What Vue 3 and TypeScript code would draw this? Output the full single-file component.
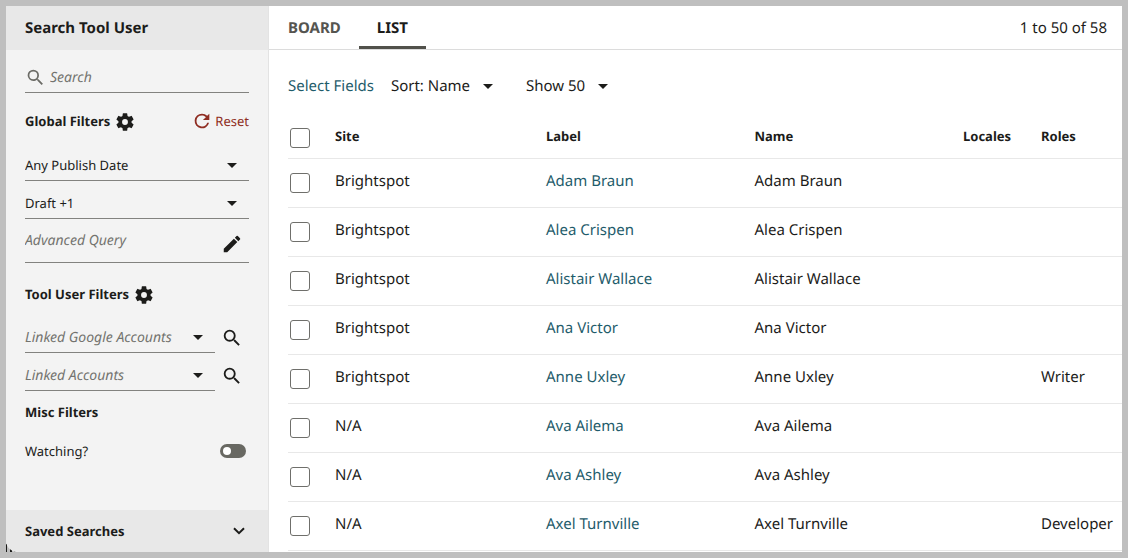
<script setup lang="ts">
import { ref } from 'vue'

interface User {
  site: string
  name: string
  role?: string
}

const users: User[] = [
  { site: 'Brightspot', name: 'Adam Braun' },
  { site: 'Brightspot', name: 'Alea Crispen' },
  { site: 'Brightspot', name: 'Alistair Wallace' },
  { site: 'Brightspot', name: 'Ana Victor' },
  { site: 'Brightspot', name: 'Anne Uxley', role: 'Writer' },
  { site: 'N/A', name: 'Ava Ailema' },
  { site: 'N/A', name: 'Ava Ashley' },
  { site: 'N/A', name: 'Axel Turnville', role: 'Developer' },
]

const linkedFilters = ['Linked Google Accounts', 'Linked Accounts']
const publishFilters = [
  { label: 'Publish date', value: 'Any Publish Date' },
  { label: 'Status', value: 'Draft +1' },
]
const activeTab = ref<'board' | 'list'>('list')
const watching = ref(false)

const gearPath =
  'M19.14 12.94c.04-.3.06-.61.06-.94s-.02-.64-.07-.94l2.03-1.58a.49.49 0 0 0 .12-.61l-1.92-3.32a.49.49 0 0 0-.59-.22l-2.39.96a7 7 0 0 0-1.62-.94l-.36-2.54a.48.48 0 0 0-.48-.41h-3.84a.47.47 0 0 0-.47.41l-.36 2.54c-.59.24-1.13.57-1.62.94l-2.39-.96a.48.48 0 0 0-.59.22L2.74 8.87a.47.47 0 0 0 .12.61l2.03 1.58c-.05.3-.09.63-.09.94s.02.64.07.94l-2.03 1.58a.49.49 0 0 0-.12.61l1.92 3.32c.12.22.37.29.59.22l2.39-.96c.5.38 1.03.7 1.62.94l.36 2.54c.05.24.24.41.48.41h3.84c.24 0 .44-.17.47-.41l.36-2.54a6.8 6.8 0 0 0 1.62-.94l2.39.96c.22.08.47 0 .59-.22l1.92-3.32a.47.47 0 0 0-.12-.61zM12 15.2a3.2 3.2 0 1 1 0-6.4 3.2 3.2 0 0 1 0 6.4z'
const searchPath =
  'M15.5 14h-.79l-.28-.27A6.47 6.47 0 0 0 16 9.5 6.5 6.5 0 1 0 9.5 16c1.61 0 3.09-.59 4.23-1.57l.27.28v.79l5 4.99L20.49 19zm-6 0a4.5 4.5 0 1 1 0-9 4.5 4.5 0 0 1 0 9z'
const refreshPath =
  'M17.65 6.35A7.96 7.96 0 0 0 12 4a8 8 0 1 0 7.73 10h-2.08A6 6 0 1 1 12 6c1.66 0 3.14.69 4.22 1.78L13 11h7V4z'
const pencilPath =
  'M3 17.25V21h3.75L17.81 9.94l-3.75-3.75zM20.71 7.04a1 1 0 0 0 0-1.41l-2.34-2.34a1 1 0 0 0-1.41 0l-1.83 1.83 3.75 3.75z'
</script>

<template>
  <div class="frame">
    <div class="window">
      <svg class="backdrop" viewBox="0 0 10 10" aria-hidden="true">
        <path d="M0 2h1v8H0zM4 7h2v3H4zM8 9h2v1H8z" />
      </svg>
      <aside class="sidebar">
        <h1 class="side-title">Search Tool User</h1>

        <form class="filters" @submit.prevent>
          <label class="search-field">
            <svg class="icon" viewBox="0 0 24 24" aria-hidden="true"><path :d="searchPath" /></svg>
            <input type="search" placeholder="Search" aria-label="Search" />
          </label>

          <div class="group-head">
            <h2>Global Filters</h2>
            <button type="button" class="icon-button" aria-label="Configure global filters">
              <svg class="icon" viewBox="0 0 24 24" aria-hidden="true"><path :d="gearPath" /></svg>
            </button>
            <button type="reset" class="reset">
              <svg class="icon" viewBox="0 0 24 24" aria-hidden="true"><path :d="refreshPath" /></svg>
              Reset
            </button>
          </div>

          <div v-for="f in publishFilters" :key="f.value" class="picker line">
            <select :aria-label="f.label">
              <option>{{ f.value }}</option>
            </select>
            <svg class="caret" viewBox="0 0 10 5" aria-hidden="true"><path d="M0 0h10L5 5z" /></svg>
          </div>

          <div class="query line">
            <input type="text" placeholder="Advanced Query" aria-label="Advanced Query" />
            <button type="button" class="icon-button" aria-label="Edit query">
              <svg class="icon" viewBox="0 0 24 24" aria-hidden="true"><path :d="pencilPath" /></svg>
            </button>
          </div>

          <div class="group-head user-head">
            <h2>Tool User Filters</h2>
            <button type="button" class="icon-button" aria-label="Configure tool user filters">
              <svg class="icon" viewBox="0 0 24 24" aria-hidden="true"><path :d="gearPath" /></svg>
            </button>
          </div>

          <div v-for="label in linkedFilters" :key="label" class="linked">
            <div class="picker line hint">
              <select :aria-label="label">
                <option>{{ label }}</option>
              </select>
              <svg class="caret" viewBox="0 0 10 5" aria-hidden="true"><path d="M0 0h10L5 5z" /></svg>
            </div>
            <button type="button" class="icon-button" :aria-label="'Find ' + label">
              <svg class="icon" viewBox="0 0 24 24" aria-hidden="true"><path :d="searchPath" /></svg>
            </button>
          </div>

          <h2 class="misc">Misc Filters</h2>
          <label class="watching">
            Watching?
            <input v-model="watching" type="checkbox" role="switch" class="switch" />
          </label>
        </form>

        <button type="button" class="saved">
          Saved Searches
          <svg viewBox="0 0 12 8" aria-hidden="true"><path d="M1 1.2l5 5 5-5" /></svg>
        </button>
      </aside>

      <main class="content">
        <header class="topbar">
          <nav class="tabs">
            <button type="button" :class="{ active: activeTab === 'board' }" @click="activeTab = 'board'">BOARD</button>
            <button type="button" :class="{ active: activeTab === 'list' }" @click="activeTab = 'list'">LIST</button>
          </nav>
          <span>1 to 50 of 58</span>
        </header>

        <div class="toolbar">
          <a href="#">Select Fields</a>
          <div class="picker menu">
            <select aria-label="Sort">
              <option>Sort: Name</option>
            </select>
            <svg class="caret" viewBox="0 0 10 5" aria-hidden="true"><path d="M0 0h10L5 5z" /></svg>
          </div>
          <div class="picker menu">
            <select aria-label="Results per page">
              <option>Show 50</option>
            </select>
            <svg class="caret" viewBox="0 0 10 5" aria-hidden="true"><path d="M0 0h10L5 5z" /></svg>
          </div>
        </div>

        <table class="results">
          <colgroup>
            <col class="col-check" />
            <col class="col-site" />
            <col />
            <col />
            <col class="col-locales" />
            <col class="col-roles" />
          </colgroup>
          <thead>
            <tr>
              <th class="check"><input type="checkbox" class="box" aria-label="Select all" /></th>
              <th>Site</th>
              <th>Label</th>
              <th>Name</th>
              <th>Locales</th>
              <th>Roles</th>
            </tr>
          </thead>
          <tbody>
            <tr v-for="u in users" :key="u.name">
              <td class="check"><input type="checkbox" class="box" :aria-label="'Select ' + u.name" /></td>
              <td>{{ u.site }}</td>
              <td><a href="#">{{ u.name }}</a></td>
              <td>{{ u.name }}</td>
              <td></td>
              <td>{{ u.role }}</td>
            </tr>
          </tbody>
        </table>
      </main>
    </div>
  </div>
</template>

<style>
body {
  margin: 0;
  overflow: hidden;
}
</style>

<style scoped>
.frame {
  box-sizing: border-box;
  height: 100vh;
  padding: 6px;
  background: #bfbfbf;
  color: #1c1c1a;
  font: 15px/20px "Noto Sans", "Open Sans", sans-serif;
  text-rendering: geometricPrecision;
}
.frame *,
.frame *::before {
  box-sizing: border-box;
}
.window {
  position: relative;
  display: flex;
  height: 100%;
  overflow: hidden;
}
.backdrop {
  position: absolute;
  bottom: 0;
  left: 0;
  width: 10px;
  height: 10px;
}
button,
input,
select {
  margin: 0;
  padding: 0;
  border: 0;
  background: none;
  color: inherit;
  font: inherit;
  text-rendering: inherit;
  appearance: none;
  outline: none;
}
button,
select {
  cursor: pointer;
}
a {
  color: #1f5c6b;
  text-decoration: none;
}
svg {
  display: block;
  fill: currentColor;
}
.icon {
  width: 22px;
  height: 22px;
}

.sidebar {
  position: relative;
  display: flex;
  flex: 0 0 263px;
  flex-direction: column;
  border-right: 1px solid #e3e3e3;
  border-bottom-left-radius: 12px;
  overflow: hidden;
  background: #f3f3f3;
  font-size: 13px;
}
.side-title {
  margin: 0;
  padding: 12px 19px;
  background: #e8e8e8;
  font-size: 15px;
  font-weight: 700;
}
.filters {
  flex: 1;
  padding: 12px 19px 0;
}
.line,
.search-field {
  border-bottom: 1px solid #82827f;
}
.search-field {
  display: flex;
  align-items: center;
  gap: 4px;
  height: 31px;
  color: #6b6b66;
}
input::placeholder {
  color: #73736f;
  font-style: italic;
  opacity: 1;
}
.search-field input,
.query input {
  flex: 1;
  min-width: 0;
  font-size: 14px;
}
.search-field input {
  padding-top: 2px;
}
.search-field .icon {
  width: 21px;
  height: 21px;
}
.group-head {
  display: flex;
  align-items: center;
  height: 58px;
}
.group-head h2,
.misc {
  margin: 0;
  font-size: 13px;
  font-weight: 700;
}
.group-head h2 {
  padding-bottom: 2px;
}
.group-head .icon-button {
  margin-left: 4px;
}
.reset {
  display: flex;
  align-items: center;
  gap: 2px;
  margin-left: auto;
  padding-bottom: 2px;
  color: #8f2d22;
}
.picker {
  display: grid;
  align-items: center;
}
.picker select,
.picker .caret {
  grid-area: 1 / 1;
}
.picker select {
  width: 100%;
}
.caret {
  justify-self: end;
  width: 10px;
  height: 5px;
  margin-right: 12px;
  pointer-events: none;
}
.picker.line {
  height: 30px;
}
.picker.line:not(.hint) select {
  padding-bottom: 2px;
}
.picker.line + .picker.line {
  margin-top: 8px;
}
.query {
  display: flex;
  align-items: center;
  height: 44px;
}
.query .icon-button {
  padding: 6px 6px 0 0;
}
.user-head {
  height: 60px;
  padding-top: 3px;
}
.linked {
  display: flex;
  align-items: center;
  gap: 6px;
  padding-right: 6px;
}
.linked + .linked {
  margin-top: 8px;
}
.linked .picker {
  flex: 1;
}
.hint select {
  color: #73736f;
  font-size: 14px;
  font-style: italic;
}
.misc {
  margin-top: 11px;
}
.watching {
  display: flex;
  align-items: center;
  justify-content: space-between;
  margin-top: 19px;
  padding-right: 3px;
}
.switch {
  width: 26px;
  height: 14px;
  padding: 3px;
  border-radius: 7px;
  background: #686862;
}
.switch::before {
  display: block;
  width: 8px;
  height: 8px;
  border-radius: 50%;
  background: #fff;
  content: "";
}
.switch:checked::before {
  margin-left: auto;
}
.saved {
  display: flex;
  align-items: center;
  justify-content: space-between;
  height: 42px;
  padding: 0 23px 0 19px;
  background: #e8e8e8;
  font-weight: 700;
}
.saved svg {
  width: 12px;
  height: 8px;
  fill: none;
  stroke: currentColor;
  stroke-width: 2;
}

.content {
  display: flex;
  flex: 1;
  flex-direction: column;
  min-width: 0;
  background: #fff;
}
.topbar {
  display: flex;
  flex: none;
  align-items: center;
  justify-content: space-between;
  height: 44px;
  padding-right: 15px;
  border-bottom: 1px solid #dcdcdc;
}
.tabs {
  display: flex;
  align-self: stretch;
  margin-left: 1px;
}
.tabs button {
  padding: 0 18px;
  border-bottom: 3px solid transparent;
  border-top: 3px solid transparent;
  color: #555550;
  font-weight: 700;
}
.tabs button.active {
  border-bottom-color: #51514b;
  color: #1c1c1a;
}
.toolbar {
  display: flex;
  align-items: center;
  gap: 17px;
  padding: 26px 19px 23px;
}
.menu select {
  padding-right: 22px;
}
.menu .caret {
  margin-right: 0;
}
.menu + .menu {
  margin-left: 16px;
}
.results {
  width: calc(100% - 19px);
  margin-left: 19px;
  border-collapse: collapse;
  table-layout: fixed;
}
.col-check {
  width: 47px;
}
.col-site {
  width: 211px;
}
.col-locales {
  width: 78px;
}
.col-roles {
  width: 81px;
}
.results th,
.results td {
  height: 49px;
  padding: 0 0 3px;
  border-bottom: 1px solid #e8e8e8;
  text-align: left;
  white-space: nowrap;
}
.results th {
  height: 39px;
  padding-bottom: 5px;
  font-size: 13px;
  font-weight: 700;
}
.results .check {
  padding: 0 0 0 2px;
}
.box {
  display: block;
  width: 20px;
  height: 20px;
  border: 1px solid #6f6f6b;
  border-radius: 3px;
  background: #fff;
}
.box:checked {
  background: #51514b;
}
</style>
